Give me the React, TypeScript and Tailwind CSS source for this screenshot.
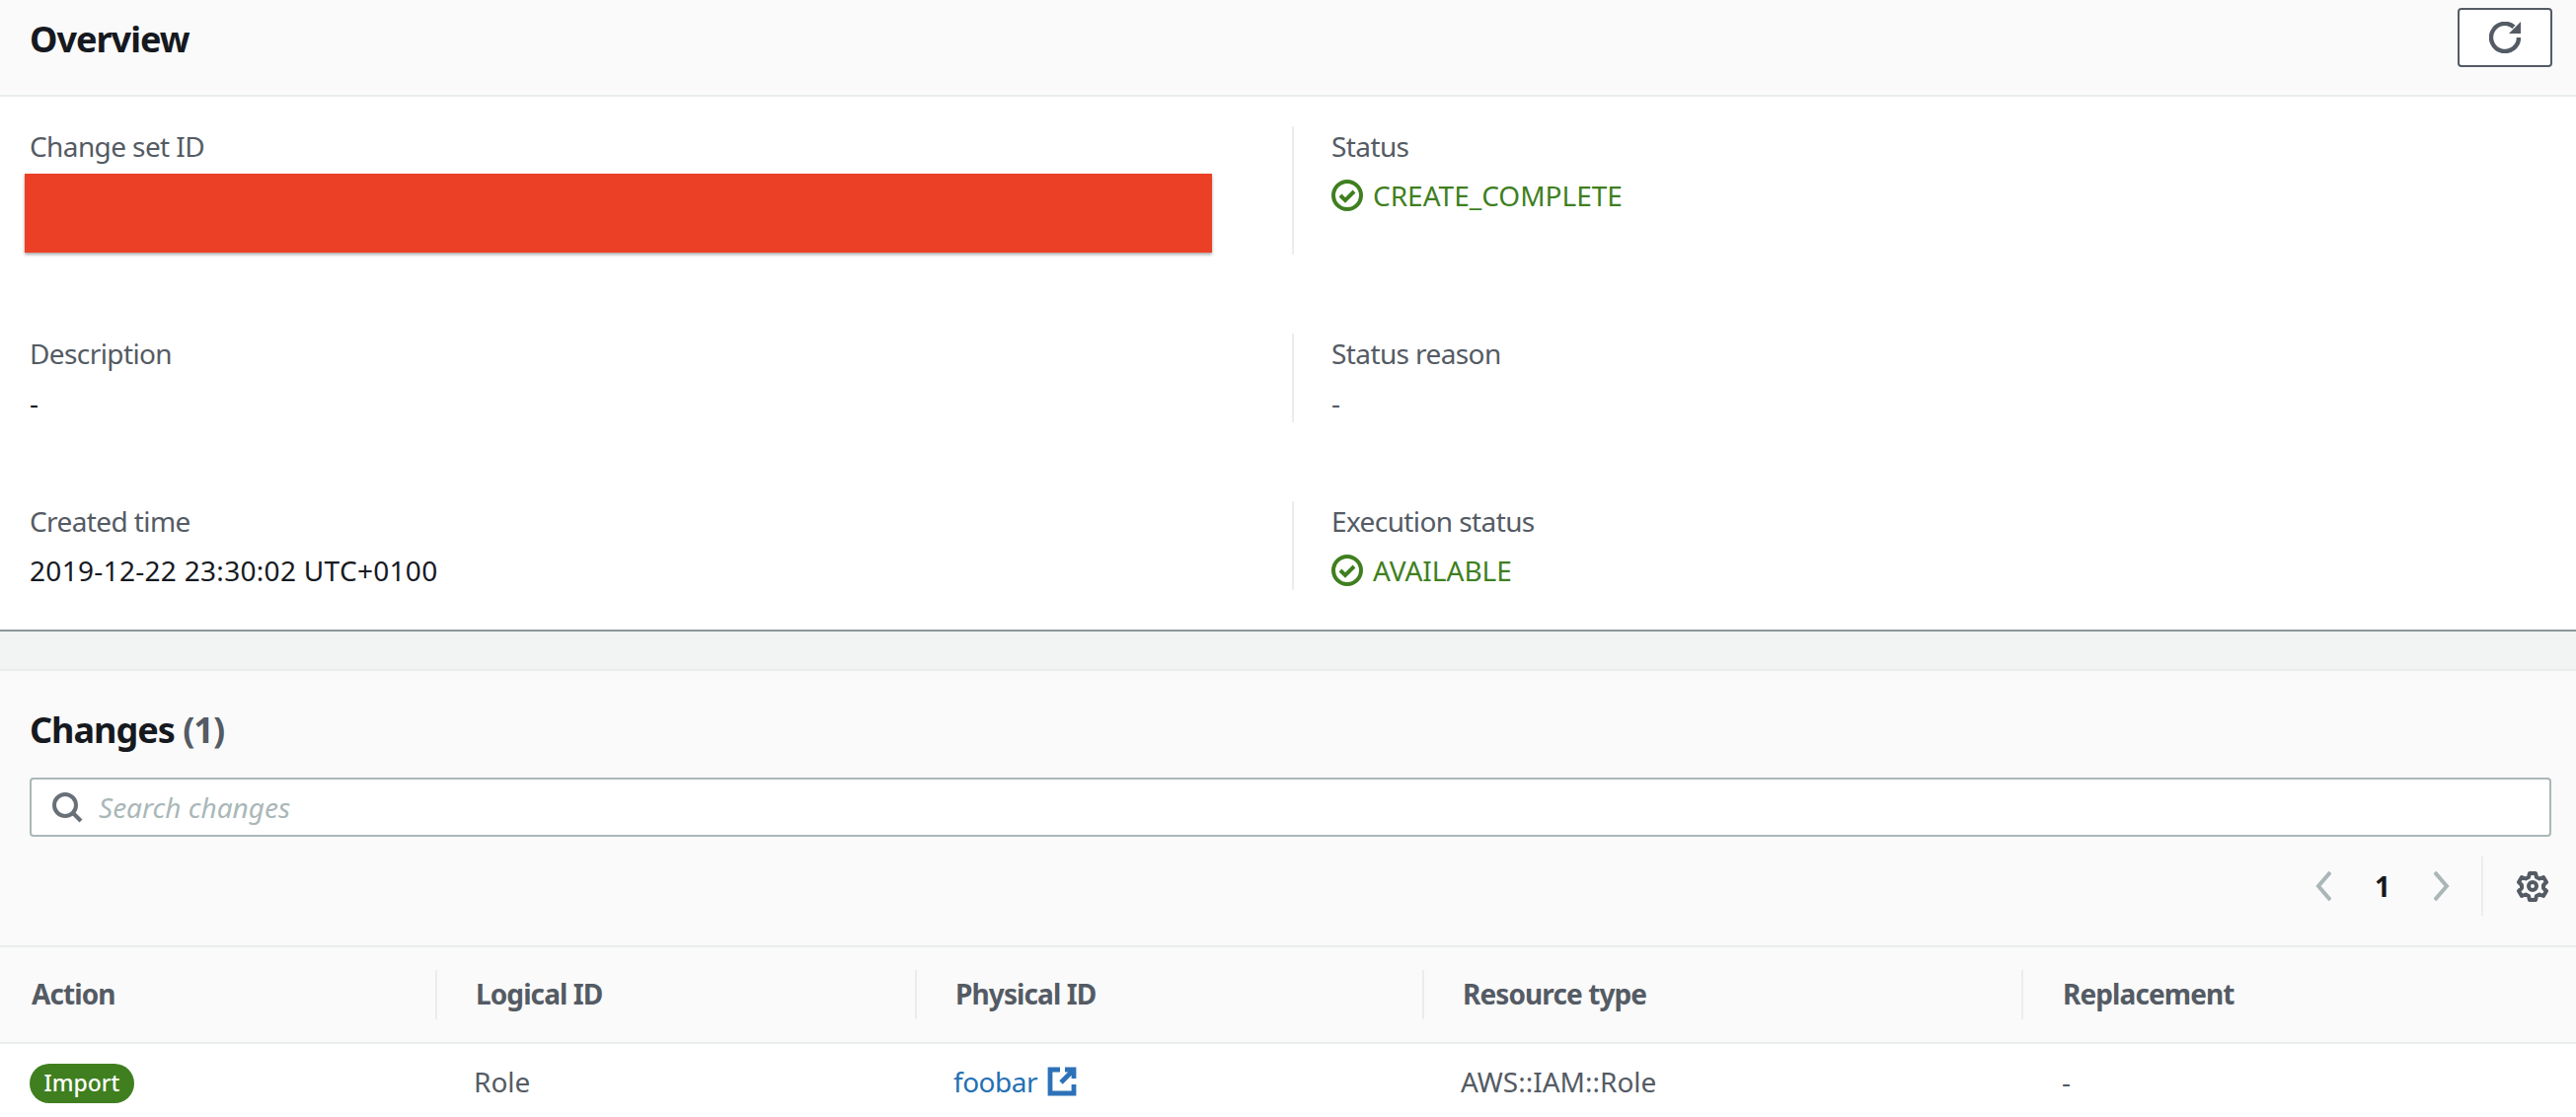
const font = "font-['Noto_Sans',sans-serif]";

function CheckCircle() {
  return (
    <svg viewBox="0 0 16 16" fill="none" stroke="#3f7f1f" strokeWidth="2" className="w-[32px] h-[32px] shrink-0">
      <circle cx="8" cy="8" r="7" />
      <path d="M4.500 8 7 10.500 11.500 6" />
    </svg>
  );
}

function Field({ label, children, divider }: { label: string; children: React.ReactNode; divider?: boolean }) {
  return (
    <div className={divider ? "h-full border-l-2 border-[#eaeded] pl-[38px]" : ""}>
      <div className="text-[28px] leading-[40px] tracking-[-0.6px] text-[#545b64]">{label}</div>
      <div className="mt-[10px] text-[28px] leading-[40px] text-[#16191f]">{children}</div>
    </div>
  );
}

function Status({ text }: { text: string }) {
  return (
    <div className="flex items-center gap-[10px] text-[#3f7f1f]">
      <CheckCircle />
      <span>{text}</span>
    </div>
  );
}

const columns = [
  { name: "Action", cls: "w-[441px] pl-[32px]" },
  { name: "Logical ID", cls: "w-[486px] pl-[39px] border-l-2 border-[#eaeded]" },
  { name: "Physical ID", cls: "w-[514px] pl-[39px] border-l-2 border-[#eaeded]" },
  { name: "Resource type", cls: "w-[607px] pl-[39px] border-l-2 border-[#eaeded]" },
  { name: "Replacement", cls: "flex-1 pl-[40px] border-l-2 border-[#eaeded]" },
];

export default function App() {
  return (
    <div className={`${font} w-[2610px] h-[1132px] overflow-hidden bg-white`}>
      <div className="h-[98px] bg-[#fafafa] border-b-2 border-[#eaeded] flex justify-between pl-[30px] pr-[24px] pt-[8px]">
        <h1 className="text-[36px] leading-[64px] font-bold tracking-[-1px] text-[#16191f]">Overview</h1>
        <button className="w-[96px] h-[60px] bg-white border-2 border-[#545b64] rounded-[4px] flex items-center justify-center">
          <svg viewBox="0 0 16 16" fill="none" stroke="#545b64" strokeWidth="2.2" className="w-[32px] h-[32px]">
            <path d="M16 0v6h-6z" fill="#545b64" stroke="none" />
            <path d="M15 8a7 7 0 1 1-2.500-5.400" />
          </svg>
        </button>
      </div>

      <div className="h-[542px] border-b-2 border-[#8d979c] grid grid-cols-[1309px_1fr] grid-rows-[130px_80px_90px_80px_90px] pt-[30px]">
        <div className="pl-[30px] row-span-2">
          <div className="text-[28px] leading-[40px] tracking-[-0.6px] text-[#545b64]">Change set ID</div>
          <div className="-ml-[5px] mt-[8px] w-[1203px] h-[80px] bg-[#ec4026] shadow-[0_2px_3px_rgba(0,0,0,0.35)]" />
        </div>
        <div>
          <Field label="Status" divider><Status text="CREATE_COMPLETE" /></Field>
        </div>
        <div className="col-start-2" />
        <div className="pl-[30px]"><Field label="Description">-</Field></div>
        <div><Field label="Status reason" divider><span className="text-[#545b64]">-</span></Field></div>
        <div className="col-span-2" />
        <div className="pl-[30px]">
          <Field label="Created time"><span className="tracking-[0.3px]">2019-12-22 23:30:02 UTC+0100</span></Field>
        </div>
        <div><Field label="Execution status" divider><Status text="AVAILABLE" /></Field></div>
      </div>

      <div className="h-[40px] bg-[#f2f3f3] border-b-2 border-[#eaeded]" />

      <div className="h-[280px] bg-[#fafafa] border-b-2 border-[#eaeded] px-[30px] pt-[38px]">
        <h2 className="text-[36px] leading-[44px] font-bold tracking-[-1px] text-[#16191f]">
          Changes <span className="font-bold text-[#545b64]">(1)</span>
        </h2>
        <div className="mt-[26px] mr-[-5px] h-[60px] bg-white border-2 border-[#aab7b8] rounded-[4px] flex items-center pl-[20px]">
          <svg viewBox="0 0 16 16" fill="none" stroke="#687078" strokeWidth="2" className="w-[32px] h-[32px]">
            <circle cx="7" cy="7" r="5.500" />
            <path d="m11 11 4 4" />
          </svg>
          <span className="ml-[16px] text-[28px] italic text-[#aab7b8]">Search changes</span>
        </div>
        <div className="mt-[20px] mr-[-30px] h-[60px] flex items-center justify-end">
          <svg viewBox="0 0 16 32" fill="none" stroke="#aab7b8" strokeWidth="4" className="w-[16px] h-[32px]">
            <path d="M15 2 3 16l12 14" />
          </svg>
          <span className="mx-[44px] text-[28px] font-bold text-[#16191f]">1</span>
          <svg viewBox="0 0 16 32" fill="none" stroke="#aab7b8" strokeWidth="4" className="w-[16px] h-[32px]">
            <path d="m1 2 12 14L1 30" />
          </svg>
          <div className="ml-[32px] h-[60px] border-l-2 border-[#eaeded] pl-[34px] pr-[28px] flex items-center">
            <svg viewBox="0 0 32 32" fill="none" stroke="#545b64" strokeWidth="4" className="w-[32px] h-[32px]">
              <circle cx="16" cy="16" r="4" />
              <path d="M13 3h6l1 4 3 1.500 4-1.500 3 5-3 3v3l3 3-3 5-4-1.500-3 1.500-1 4h-6l-1-4-3-1.500-4 1.500-3-5 3-3v-3l-3-3 3-5 4 1.500 3-1.500z" strokeLinejoin="round" />
            </svg>
          </div>
        </div>
      </div>

      <div className="h-[98px] bg-[#fafafa] border-b-2 border-[#eaeded] flex items-center">
        {columns.map((c) => (
          <div key={c.name} className={`${c.cls} h-[50px] flex items-center`}>
            <span className="pb-[3px] text-[28px] font-bold tracking-[-0.9px] text-[#545b64]">{c.name}</span>
          </div>
        ))}
      </div>

      <div className="h-[76px] flex items-center text-[28px] text-[#545b64]">
        <div className="w-[441px] pl-[30px]">
          <span className="inline-flex items-center justify-center w-[106px] h-[40px] rounded-full bg-[#3f7f1f] text-white text-[23px] font-medium">Import</span>
        </div>
        <div className="w-[486px] pl-[39px]">Role</div>
        <div className="w-[514px] pl-[39px] flex items-center gap-[10px] text-[#2470b3]">
          <span className="tracking-[-0.5px]">foobar</span>
          <svg viewBox="0 0 16 16" fill="none" stroke="#2d72b8" strokeWidth="2.4" className="w-[32px] h-[32px]">
            <path d="M6.500 2H1.500v12h12V9.500" />
            <path d="M9 2h4.500v4.500" />
            <path d="M13.500 2 7 8.500" />
          </svg>
        </div>
        <div className="w-[607px] pl-[39px]">AWS::IAM::Role</div>
        <div className="flex-1 pl-[41px]">-</div>
      </div>
    </div>
  );
}
